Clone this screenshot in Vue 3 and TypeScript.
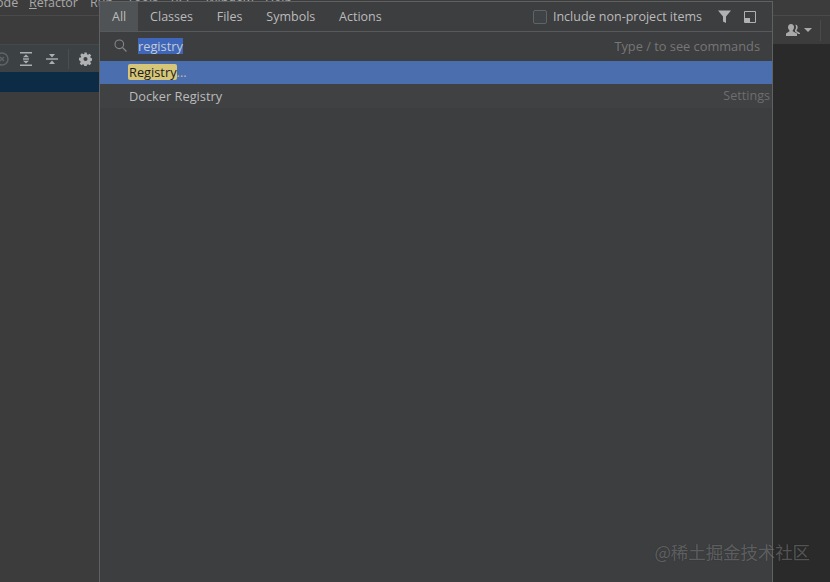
<script setup lang="ts">
const menus = [
  { t: 'ode', w: 33 },
  { t: '', w: 61 },
  { t: 'Run', w: 37 },
  { t: 'Tools', w: 44 },
  { t: 'VCS', w: 35 },
  { t: 'Window', w: 59 },
  { t: 'Help', w: 40 },
]
const tabs = ['All', 'Classes', 'Files', 'Symbols', 'Actions']
</script>

<template>
  <div class="ide">
    <div class="menubar">
      <span v-for="m in menus" :key="m.w" class="menu" :style="{ width: m.w + 'px' }">
        <template v-if="m.t">{{ m.t }}</template>
        <template v-else><u>R</u>efactor</template>
      </span>
    </div>
    <div class="navbar">
      <svg width="15" height="12" viewBox="0 0 15 12" fill="#a9a9a9"><path d="M5 0c2 0 3 1.400 3 3.300 0 1.400-.6 2.500-1.300 3.100v.9L11 9.500V12H0V9.500l3.500-2.200v-.9C2.700 5.800 2 4.700 2 3.300 2 1.400 3 0 5 0z"/><path d="M9 .4c1.800 0 2.700 1.300 2.700 2.900 0 1.200-.5 2.200-1.100 2.800v.9l3.400 1.900V10h-1.800L9 7.500V5.900c.7-.7 1-1.600 1-2.700 0-1-.3-1.900-.9-2.600z"/></svg>
      <i class="caret"></i>
      <i class="nav-sep"></i>
    </div>
    <div class="body">
      <div class="left">
        <div class="tools">
          <svg class="t0" width="9" height="14" viewBox="0 0 9 14" fill="none" stroke="#5f6366" stroke-width="1.500"><circle cx="2" cy="7" r="6"/><path d="M0 5l4 4M4 5l-4 4"/></svg>
          <svg class="t1" width="12" height="14" viewBox="0 0 12 14" fill="#a9b0b4"><rect y="0" width="12" height="1.500"/><rect y="12.500" width="12" height="1.500"/><rect x="3" y="6.300" width="6" height="1.400"/><path d="M6 2.600l3 2.600H3zM6 11.400l3-2.600H3z"/></svg>
          <svg class="t2" width="12" height="14" viewBox="0 0 12 14" fill="#a9b0b4"><rect y="6.300" width="12" height="1.400"/><path d="M6 5.400L3 2h6zM6 8.600l3 3.400H3z"/></svg>
          <i class="sep"></i>
          <svg class="gear" width="13" height="14" viewBox="0 0 14 14"><path fill="#afb1b3" fill-rule="evenodd" d="M5.700 0h2.600l.3 1.900 1.200.5 1.600-1.100 1.800 1.800-1.100 1.600.5 1.200 1.900.3v2.600l-1.900.3-.5 1.200 1.100 1.600-1.800 1.800-1.600-1.100-1.200.5-.3 1.900H5.700l-.3-1.900-1.200-.5-1.600 1.100-1.800-1.800 1.100-1.600-.5-1.200L0 8.300V5.700l1.900-.3.500-1.200-1.100-1.600 1.800-1.800 1.600 1.100 1.200-.5zM7 4.800a2.200 2.200 0 100 4.400 2.200 2.200 0 000-4.400z"/></svg>
        </div>
        <div class="selected-row"></div>
      </div>
      <div class="right"></div>
    </div>

    <div class="popup">
      <div class="tabbar">
        <span v-for="(t, i) in tabs" :key="t" class="tab" :class="{ active: i === 0 }">{{ t }}</span>
        <div class="spring"></div>
        <span class="check"></span>
        <span class="include">Include non-project items</span>
        <svg class="filter" width="13" height="13" viewBox="0 0 13 13"><path fill="#afb1b3" d="M0 .5h13L8 6.500V13L5 11.500v-5z"/></svg>
        <svg class="pin" width="12" height="12" viewBox="0 0 12 12"><path fill="none" stroke="#afb1b3" stroke-width="1" d="M.5.5h11v11H.5z"/><path fill="#afb1b3" d="M1 7h5v4H1z"/></svg>
      </div>
      <div class="search">
        <svg class="glass" width="13" height="13" viewBox="0 0 13 13" fill="none" stroke="#858789" stroke-width="1.100"><circle cx="5.300" cy="5.300" r="4.300"/><path d="M8.500 8.500l4 4"/></svg>
        <span class="query">registry</span>
        <div class="spring"></div>
        <span class="hint">Type / to see commands</span>
      </div>
      <div class="result current">
        <span class="match">Registry</span><span class="dots">...</span>
      </div>
      <div class="result second">
        <span class="name">Docker Registry</span>
        <div class="spring"></div>
        <span class="where">Settings</span>
      </div>
    </div>

    <div class="watermark">@稀土掘金技术社区</div>
  </div>
</template>

<style scoped>
.ide {
  position: relative;
  width: 830px;
  height: 582px;
  overflow: hidden;
  display: flex;
  flex-direction: column;
  background: #3c3c3c;
  font-family: "Open Sans", "Noto Sans", sans-serif;
  color: #bbbbbb;
}
.menubar {
  height: 15px;
  flex: none;
  display: flex;
  align-items: flex-end;
  border-bottom: 1px solid #4a4a4a;
  font-size: 12.500px;
  line-height: 12px;
  overflow: hidden;
}
.menu {
  display: block;
  flex: none;
  padding-bottom: 6px;
  color: #a9a9a9;
  box-sizing: border-box;
  white-space: nowrap;
}
.menu:first-child { margin-left: -4px; }
.navbar {
  height: 28px;
  flex: none;
  display: flex;
  justify-content: flex-end;
  align-items: center;
  padding-right: 9px;
  box-sizing: border-box;
}
.caret {
  width: 0;
  height: 0;
  margin-left: 3px;
  border-left: 4px solid transparent;
  border-right: 4px solid transparent;
  border-top: 4px solid #a9a9a9;
}
.nav-sep {
  width: 1px;
  height: 21px;
  margin-left: 8px;
  background: #4a4a4a;
}
.body { flex: 1; display: flex; min-height: 0; }
.left { flex: 1; }
.tools {
  height: 28px;
  width: 99px;
  display: flex;
  align-items: center;
  background: #3c4144;
  box-sizing: border-box;
  border-top: 1px solid #44494c;
}
.t1 { margin-left: 11px; }
.t2 { margin-left: 14px; }
.sep {
  width: 1px;
  height: 20px;
  margin-left: 10px;
  background: #4a4f52;
}
.gear { margin-left: 10px; }
.selected-row { height: 20px; width: 99px; background: #0c2b45; }
.right { width: 57px; background: #2a2a2a; }
.popup {
  position: absolute;
  left: 99px;
  top: 1px;
  width: 674px;
  height: 582px;
  box-sizing: border-box;
  background: #3d3e40;
  border: 1px solid #5f6163;
  border-bottom: 0;
  display: flex;
  flex-direction: column;
  font-size: 12.800px;
}
.tabbar {
  height: 30px;
  flex: none;
  display: flex;
  align-items: center;
  border-bottom: 1px solid #58595b;
  box-sizing: border-box;
  font-size: 12.500px;
}
.tab {
  height: 29px;
  display: flex;
  align-items: center;
  padding: 0 11.900px;
  color: #bbbbbb;
}
.tab.active { background: #505355; padding: 0 12px; }
.spring { flex: 1; }
.check {
  width: 14px;
  height: 14px;
  box-sizing: border-box;
  border: 1px solid #5e6365;
  border-radius: 2px;
  background: #404345;
  margin-right: 6px;
}
.include { margin-right: 16px; }
.filter { margin-right: 13px; }
.pin { margin-right: 16px; }
.search {
  height: 29px;
  flex: none;
  display: flex;
  align-items: center;
  padding: 0 12px 2px 14px;
  box-sizing: border-box;
}
.glass { margin-right: 11px; }
.query {
  background: #3f66b8;
  color: #c4cbd6;
  line-height: 16px;
}
.hint { color: #767676; }
.result {
  height: 24px;
  flex: none;
  display: flex;
  align-items: center;
  padding-left: 29px;
  padding-right: 2px;
  color: #bbbbbb;
  box-sizing: border-box;
}
.result.current { background: #4b6eaf; height: 23px; padding-bottom: 1px; }
.result.second { background: #3f4143; padding-bottom: 1px; }
.match {
  background: #d6c679;
  color: #1c1c1c;
  border-radius: 2px;
  line-height: 16px;
  padding-left: 1px;
  margin-left: -1px;
}
.dots { color: #bbbbbb; }
.where { color: #6e6e6e; font-size: 12.600px; line-height: 18px; padding-top: 1px; }
.watermark {
  position: absolute;
  right: 20px;
  top: 542px;
  font-family: "Noto Sans CJK SC", "Noto Sans", sans-serif;
  font-size: 17.400px;
  line-height: 20px;
  color: rgba(255, 255, 255, 0.26);
  text-shadow: 0 0 1px rgba(0, 0, 0, 0.4);
}
</style>
